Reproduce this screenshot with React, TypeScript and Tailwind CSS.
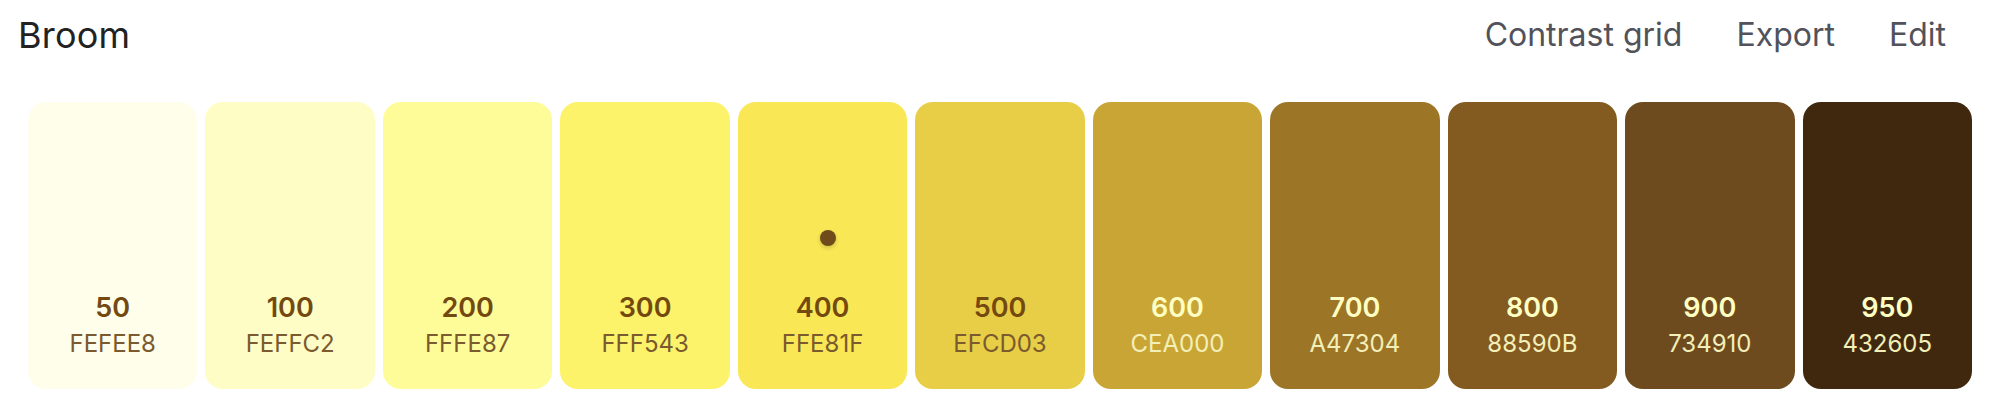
const shades = [
  { step: "50", hex: "FEFEE8", bg: "bg-[#fefeea]", dark: false },
  { step: "100", hex: "FEFFC2", bg: "bg-[#fdfdc5]", dark: false },
  { step: "200", hex: "FFFE87", bg: "bg-[#fefc99]", dark: false },
  { step: "300", hex: "FFF543", bg: "bg-[#fcf36a]", dark: false },
  { step: "400", hex: "FFE81F", bg: "bg-[#f9e755]", dark: false, base: true },
  { step: "500", hex: "EFCD03", bg: "bg-[#e8ce46]", dark: false },
  { step: "600", hex: "CEA000", bg: "bg-[#c9a535]", dark: true },
  { step: "700", hex: "A47304", bg: "bg-[#9d7527]", dark: true },
  { step: "800", hex: "88590B", bg: "bg-[#835a20]", dark: true },
  { step: "900", hex: "734910", bg: "bg-[#6e4b1f]", dark: true },
  { step: "950", hex: "432605", bg: "bg-[#40280e]", dark: true },
]

export default function App() {
  return (
    <div className="w-[1990px] h-[406px] bg-white font-['Inter',sans-serif]">
      <div className="flex h-[70px] items-center justify-between pl-[18px] pr-[18px]">
        <h1 className="text-[36px] leading-none font-normal tracking-[0.2px] text-[#222222]">Broom</h1>
        <nav className="flex items-center text-[32px] leading-none text-[#52525b]">
          <button className="px-[27px]">Contrast grid</button>
          <button className="px-[27px]">Export</button>
          <button className="pl-[27px] pr-[26px]">Edit</button>
        </nav>
      </div>

      <div className="mt-[32px] flex gap-[8px] pl-[28px] pr-[18px]">
        {shades.map((s) => (
          <div
            key={s.step}
            className={`relative flex h-[287px] flex-1 flex-col items-center justify-end rounded-[18px] pb-[33px] ${s.bg}`}
          >
            {s.base && (
              <span className="absolute left-[82px] top-[128px] h-[16px] w-[16px] rounded-full bg-[#6f4a1a] shadow-[0_2px_4px_rgba(0,0,0,0.18)]" />
            )}
            <span
              className={`text-[27px] leading-none font-semibold ${s.dark ? "text-[#feffc2]" : "text-[#734910]"}`}
            >
              {s.step}
            </span>
            <span
              className={`mt-[11px] text-[24px] leading-none ${s.dark ? "text-[#f3efb8]" : "text-[#7a5a2e]"}`}
            >
              {s.hex}
            </span>
          </div>
        ))}
      </div>
    </div>
  )
}
